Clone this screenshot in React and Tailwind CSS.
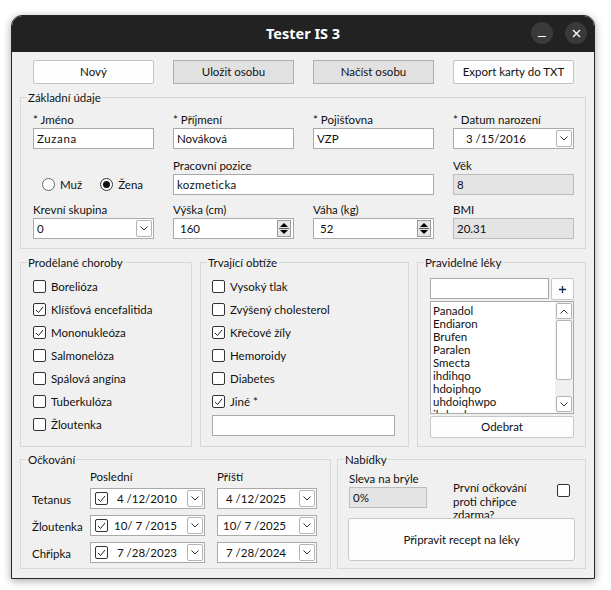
import React from 'react';

const Check = ({ checked }) => (
  <span className="w-[13px] h-[13px] shrink-0 rounded-[2px] border border-[#333] bg-white flex items-center justify-center">
    {checked && (
      <svg width="9" height="8" viewBox="0 0 9 8">
        <polyline points="1,4 3.5,6.5 8,1" fill="none" stroke="#222" strokeWidth="1" />
      </svg>
    )}
  </span>
);

const Chevron = ({ up }) => (
  <svg width="8" height="5" viewBox="0 0 8 5">
    <polyline points={up ? '0.5,4.5 4,1 7.5,4.5' : '0.5,0.5 4,4 7.5,0.5'} fill="none" stroke="#333" strokeWidth="1" />
  </svg>
);

const DropBtn = () => (
  <span className="w-[16px] h-[17px] rounded-[2px] border border-[#b4b4b4] bg-white flex items-center justify-center">
    <Chevron />
  </span>
);

const Spin = () => (
  <span className="w-[14px] h-[17px] border border-[#9a9a9a] bg-[#e6e6e6] flex flex-col items-center justify-center gap-[1px]">
    <svg width="8" height="4" viewBox="0 0 8 4"><polygon points="0,4 4,0 8,4" fill="#000" /></svg>
    <span className="w-[10px] h-px bg-[#555]"></span>
    <svg width="8" height="4" viewBox="0 0 8 4"><polygon points="0,0 8,0 4,4" fill="#000" /></svg>
  </span>
);

const Label = ({ children }) => <div className="h-[15px] leading-[15px] mb-[1px]">{children}</div>;

const TextBox = ({ value, className = '' }) => (
  <div className={`h-[21px] border border-[#a9a9a9] bg-white flex items-center px-[3px] ${className}`}>{value}</div>
);

const GrayBox = ({ value, className = '' }) => (
  <div className={`h-[21px] border border-[#bcbcbc] bg-[#e4e4e4] flex items-center px-[3px] ${className}`}>{value}</div>
);

// group box: padding goes on the inner div so the legend stays at the left edge
const Group = ({ title, className = '', inner = '', children }) => (
  <fieldset className={`border border-[#d8d8d8] min-w-0 ${className}`}>
    <legend className="ml-[6px] px-[1px] h-[15px] leading-[15px]">{title}</legend>
    <div className={inner}>{children}</div>
  </fieldset>
);

const DatePick = ({ value, check, className = '' }) => (
  <div className={`h-[21px] border border-[#a9a9a9] bg-white flex items-center pr-[1px] ${className}`}>
    {check ? (
      <span className="ml-[4px] mr-[6px]"><Check checked /></span>
    ) : (
      <span className="w-[5px]"></span>
    )}
    <span className="flex-1 whitespace-pre">{value}</span>
    <DropBtn />
  </div>
);

export default function App() {
  const chorby = [
    ['Borelióza', false],
    ['Klíšťová encefalitida', true],
    ['Mononukleóza', true],
    ['Salmonelóza', false],
    ['Spálová angína', false],
    ['Tuberkulóza', false],
    ['Žloutenka', false],
  ];
  const obtize = [
    ['Vysoký tlak', false],
    ['Zvýšený cholesterol', false],
    ['Křečové žíly', true],
    ['Hemoroidy', false],
    ['Diabetes', false],
    ['Jiné *', true],
  ];
  const leky = ['Panadol', 'Endiaron', 'Brufen', 'Paralen', 'Smecta', 'ihdihqo', 'hdoiphqo', 'uhdoiqhwpo', 'ihdwohqo'];
  const ockovani = [
    ['Tetanus', ' 4 /12/2010', ' 4 /12/2025'],
    ['Žloutenka', '10/ 7 /2015', '10/ 7 /2025'],
    ['Chřipka', ' 7 /28/2023', ' 7 /28/2024'],
  ];

  return (
    <div className="w-[611px] h-[590px] bg-white pt-[15px] pl-[11px] font-['Lato',sans-serif] text-[11.5px] text-[#111]">
      <div className="w-[584px] rounded-t-[11px] overflow-hidden border border-[#262626] shadow-[0_2px_8px_rgba(0,0,0,0.35)]">
        {/* Title bar */}
        <div className="h-[36px] bg-[#222] flex items-center justify-center relative">
          <span className="font-['Noto_Sans',sans-serif] font-bold text-[14.5px] text-white">Tester IS 3</span>
          <div className="absolute right-[7px] top-[6px] flex gap-[12px]">
            <span className="w-[22px] h-[22px] rounded-full bg-[#3a3a3a] flex items-end justify-center pb-[7px]">
              <span className="w-[8px] h-[1.5px] bg-white"></span>
            </span>
            <span className="w-[22px] h-[22px] rounded-full bg-[#3a3a3a] flex items-center justify-center">
              <svg width="9" height="9" viewBox="0 0 9 9">
                <path d="M1 1 L8 8 M8 1 L1 8" stroke="#fff" strokeWidth="1.4" />
              </svg>
            </span>
          </div>
        </div>

        {/* Body */}
        <div className="bg-[#f0f0f0] px-[8px] pt-[8px] pb-[9px]">
          <div className="flex gap-[19px] ml-[13px]">
            <button className="w-[121px] h-[24px] rounded-[2px] border border-[#c4c4c4] bg-[#fdfdfd]">Nový</button>
            <button className="w-[121px] h-[24px] border border-[#adadad] bg-[#e1e1e1]">Uložit osobu</button>
            <button className="w-[121px] h-[24px] border border-[#adadad] bg-[#e1e1e1]">Načíst osobu</button>
            <button className="w-[121px] h-[24px] rounded-[2px] border border-[#c4c4c4] bg-[#fdfdfd]">Export karty do TXT</button>
          </div>

          {/* Základní údaje */}
          <Group title="Základní údaje" className="mt-[6px]" inner="pl-[12px] pt-[7px] pb-[9px]">
            <div className="grid grid-cols-[121px_121px_121px_121px] gap-x-[19px]">
              <div><Label>* Jméno</Label><TextBox value="Zuzana" className="tracking-[0.6px]" /></div>
              <div><Label>* Příjmení</Label><TextBox value="Nováková" /></div>
              <div><Label>* Pojišťovna</Label><TextBox value="VZP" /></div>
              <div>
                <Label>* Datum narození</Label>
                <div className="h-[21px] border border-[#a9a9a9] bg-white flex items-center pl-[12px] pr-[1px]">
                  <span className="flex-1">3 /15/2016</span>
                  <DropBtn />
                </div>
              </div>
            </div>
            <div className="grid grid-cols-[121px_121px_121px_121px] gap-x-[19px] mt-[9px]">
              <div className="flex items-end">
                <div className="h-[21px] flex items-center pl-[9px]">
                  <span className="w-[13px] h-[13px] rounded-full border border-[#666] bg-white"></span>
                  <span className="ml-[5px]">Muž</span>
                  <span className="ml-[18px] w-[13px] h-[13px] rounded-full border border-[#333] bg-white flex items-center justify-center">
                    <span className="w-[7px] h-[7px] rounded-full bg-[#111]"></span>
                  </span>
                  <span className="ml-[5px]">Žena</span>
                </div>
              </div>
              <div className="col-span-2"><Label>Pracovní pozice</Label><TextBox value="kozmeticka" className="tracking-[0.3px]" /></div>
              <div><Label>Věk</Label><GrayBox value="8" /></div>
            </div>
            <div className="grid grid-cols-[121px_121px_121px_121px] gap-x-[19px] mt-[7px]">
              <div>
                <Label>Krevní skupina</Label>
                <div className="h-[21px] border border-[#a9a9a9] bg-white flex items-center pl-[3px] pr-[1px]">
                  <span className="flex-1">0</span>
                  <DropBtn />
                </div>
              </div>
              <div>
                <Label>Výška (cm)</Label>
                <div className="h-[21px] border border-[#a9a9a9] bg-white flex items-center pl-[6px] pr-[2px]">
                  <span className="flex-1">160</span>
                  <Spin />
                </div>
              </div>
              <div>
                <Label>Váha (kg)</Label>
                <div className="h-[21px] border border-[#a9a9a9] bg-white flex items-center pl-[6px] pr-[2px]">
                  <span className="flex-1">52</span>
                  <Spin />
                </div>
              </div>
              <div><Label>BMI</Label><GrayBox value="20.31" /></div>
            </div>
          </Group>

          {/* Middle row */}
          <div className="flex gap-[8px] mt-[6px]">
            <Group title="Prodělané choroby" className="w-[172px]" inner="pl-[12px] pt-[5px] pb-[9px]">
              {chorby.map(([t, c]) => (
                <div key={t} className="h-[23px] flex items-center gap-[5px] whitespace-nowrap">
                  <Check checked={c} /><span>{t}</span>
                </div>
              ))}
            </Group>
            <Group title="Trvající obtíže" className="w-[209px]" inner="pl-[11px] pr-[13px] pt-[5px] pb-[8px]">
              {obtize.map(([t, c]) => (
                <div key={t} className="h-[23px] flex items-center gap-[5px] whitespace-nowrap">
                  <Check checked={c} /><span>{t}</span>
                </div>
              ))}
              <div className="h-[21px] mt-[2px] border border-[#a9a9a9] bg-white"></div>
            </Group>
            <Group title="Pravidelné léky" className="flex-1" inner="pl-[12px] pr-[11px] pt-[8px] pb-[8px]">
              <div className="flex gap-[2px]">
                <div className="flex-1 h-[21px] border border-[#a9a9a9] bg-white"></div>
                <span className="w-[23px] h-[22px] rounded-[2px] border border-[#c8c8c8] bg-[#fdfdfd] flex items-center justify-center">
                  <svg width="9" height="9" viewBox="0 0 9 9"><path d="M4.5 1 V8 M1 4.5 H8" stroke="#1a2a55" strokeWidth="1.3" /></svg>
                </span>
              </div>
              <div className="mt-[1px] h-[113px] border border-[#a9a9a9] bg-white flex overflow-hidden">
                <div className="flex-1 pl-[2px] pt-[2px] leading-[13px] overflow-hidden">
                  {leky.map((l) => <div key={l}>{l}</div>)}
                </div>
                <div className="w-[18px] bg-[#f0f0f0] flex flex-col items-center pt-[1px] pb-[1px] gap-[1px]">
                  <span className="w-[16px] h-[16px] rounded-[2px] border border-[#b4b4b4] bg-white flex items-center justify-center"><Chevron up /></span>
                  <span className="w-[16px] h-[60px] rounded-[2px] border border-[#b4b4b4] bg-white"></span>
                  <span className="flex-1"></span>
                  <span className="w-[16px] h-[16px] rounded-[2px] border border-[#b4b4b4] bg-white flex items-center justify-center"><Chevron /></span>
                </div>
              </div>
              <button className="w-full mt-[2px] h-[22px] rounded-[2px] border border-[#c8c8c8] bg-[#fdfdfd]">Odebrat</button>
            </Group>
          </div>

          {/* Bottom row */}
          <div className="flex gap-[6px] mt-[5px]">
            <Group title="Očkování" className="w-[311px]" inner="pl-[11px] pt-[2px] pb-[5px]">
              <div className="flex h-[15px] leading-[15px]">
                <span className="w-[58px]"></span>
                <span className="w-[127px]">Poslední</span>
                <span>Příští</span>
              </div>
              <div className="mt-[4px] flex flex-col gap-[6px]">
                {ockovani.map(([n, a, b]) => (
                  <div key={n} className="flex items-center">
                    <span className="w-[58px] pt-[2px]">{n}</span>
                    <DatePick value={a} check className="w-[115px]" />
                    <DatePick value={b} className="w-[100px] ml-[12px]" />
                  </div>
                ))}
              </div>
            </Group>
            <Group title="Nabídky" className="flex-1" inner="px-[10px] pt-[4px] pb-[6px]">
              <div className="flex h-[47px] ml-[1px]">
                <div className="w-[78px]">
                  <Label>Sleva na brýle</Label>
                  <GrayBox value="0%" className="h-[20px]" />
                </div>
                <div className="ml-[26px] mt-[10px] w-[96px] h-[37px] overflow-hidden leading-[13.5px]">
                  První očkování proti chřipce zdarma?
                </div>
                <div className="ml-[8px] mt-[13px]"><Check /></div>
              </div>
              <button className="w-full h-[43px] rounded-[3px] border border-[#c8c8c8] bg-[#fdfdfd]">Připravit recept na léky</button>
            </Group>
          </div>
        </div>
      </div>
    </div>
  );
}
